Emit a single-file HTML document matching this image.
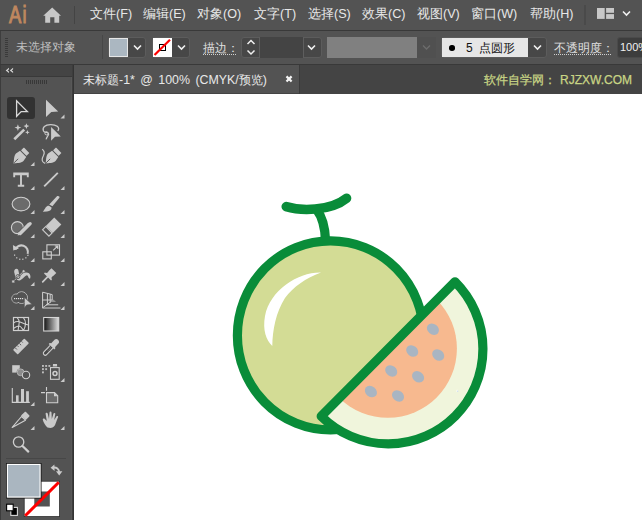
<!DOCTYPE html>
<html><head><meta charset="utf-8">
<style>
*{margin:0;padding:0;box-sizing:border-box}
html,body{width:642px;height:520px;overflow:hidden;background:#535353;font-family:"Liberation Sans",sans-serif;position:relative}
.abs{position:absolute}
.menu{position:absolute;top:0;left:0;width:642px;height:30px;background:#535353}
.mi{position:absolute;top:5.5px;font-size:12.6px;color:#e8e8e8;white-space:nowrap;line-height:16px}
.ctrl{position:absolute;top:31px;left:0;width:642px;height:33px;background:#535353;border-left:1px solid #3e3e3e}
.line{position:absolute;background:#393939}
.txt{position:absolute;white-space:nowrap}
.box{background:#474747;border:1px solid #5c5c5c;border-radius:3px}
</style></head><body>
<!-- menu bar -->
<div class="menu">
  <div class="txt" style="left:8.5px;top:3px;font-size:23px;color:#bf875f;line-height:24px;-webkit-text-stroke:1px #bf875f;transform:scaleX(0.8);transform-origin:0 0;letter-spacing:1.5px">Ai</div>
  <svg class="abs" style="left:43px;top:7px" width="19" height="16" viewBox="0 0 19 16"><path d="M9.2 0.5 L18 8.8 L16.2 8.8 L16.2 15.7 L11.4 15.7 L11.4 10.2 L7.2 10.2 L7.2 15.7 L2.2 15.7 L2.2 8.8 L0.2 8.8 Z" fill="#c8c8c8"/></svg>
  <div class="abs" style="left:74px;top:6px;width:1px;height:18px;background:#444"></div>
  <div class="mi" style="left:90px">文件(F)</div>
  <div class="mi" style="left:143px">编辑(E)</div>
  <div class="mi" style="left:197px">对象(O)</div>
  <div class="mi" style="left:254px">文字(T)</div>
  <div class="mi" style="left:308px">选择(S)</div>
  <div class="mi" style="left:362px">效果(C)</div>
  <div class="mi" style="left:417px">视图(V)</div>
  <div class="mi" style="left:471px">窗口(W)</div>
  <div class="mi" style="left:530px">帮助(H)</div>
  <div class="abs" style="left:584px;top:5px;width:2px;height:20px;background:#4a4a4a"></div>
  <svg class="abs" style="left:596px;top:7px" width="36" height="13" viewBox="0 0 36 13"><g fill="#c8c8c8"><rect x="1" y="1" width="7.7" height="10.9"/><rect x="10.1" y="1" width="7.9" height="4.8"/><rect x="10.1" y="7.1" width="7.9" height="4.8"/></g><path d="M27,4.5 L30.5,8 L34,4.5" stroke="#f0f0f0" stroke-width="1.6" fill="none"/></svg>
</div>
<div class="line" style="left:0;top:30px;width:642px;height:1px"></div>
<!-- control bar -->
<div class="ctrl"></div>
<div class="line" style="left:0;top:64px;width:642px;height:1px"></div>
<!-- control bar content -->
<div class="abs" style="left:5px;top:38px;width:3px;height:1px;background:#3a3a3a"></div><div class="abs" style="left:5px;top:40px;width:3px;height:1px;background:#3a3a3a"></div><div class="abs" style="left:5px;top:42px;width:3px;height:1px;background:#3a3a3a"></div><div class="abs" style="left:5px;top:44px;width:3px;height:1px;background:#3a3a3a"></div><div class="abs" style="left:5px;top:46px;width:3px;height:1px;background:#3a3a3a"></div><div class="abs" style="left:5px;top:48px;width:3px;height:1px;background:#3a3a3a"></div><div class="abs" style="left:5px;top:50px;width:3px;height:1px;background:#3a3a3a"></div><div class="abs" style="left:5px;top:52px;width:3px;height:1px;background:#3a3a3a"></div><div class="abs" style="left:5px;top:54px;width:3px;height:1px;background:#3a3a3a"></div><div class="abs" style="left:5px;top:56px;width:3px;height:1px;background:#3a3a3a"></div>
<div class="txt" style="left:15.5px;top:38.5px;font-size:12px;color:#bfbfbf;line-height:16px">未选择对象</div>
<div class="abs" style="left:102px;top:35px;width:1px;height:24px;background:#474747"></div>
<div class="abs box" style="left:108px;top:37px;width:38px;height:21px"></div>
<div class="abs" style="left:109px;top:38px;width:19px;height:19px;background:#abb7c1;border:1px solid #e6e6e6"></div>
<svg class="abs" style="left:133px;top:44px" width="9" height="7" viewBox="0 0 9 7"><path d="M1,1.5 L4.5,5 L8,1.5" stroke="#f0f0f0" stroke-width="1.6" fill="none"/></svg>
<div class="abs box" style="left:152px;top:37px;width:38px;height:21px"></div>
<svg class="abs" style="left:153px;top:38px" width="19" height="19" viewBox="0 0 19 19"><rect width="19" height="19" fill="#fff"/><rect x="6.5" y="6.5" width="6" height="6" fill="none" stroke="#000" stroke-width="1"/><path d="M1.5,17 L17,1.8" stroke="#f00" stroke-width="2.2"/></svg>
<svg class="abs" style="left:177px;top:44px" width="9" height="7" viewBox="0 0 9 7"><path d="M1,1.5 L4.5,5 L8,1.5" stroke="#f0f0f0" stroke-width="1.6" fill="none"/></svg>
<div class="txt" style="left:203px;top:40px;font-size:12px;color:#e0e0e0;line-height:16px">描边：</div>
<div class="abs" style="left:203px;top:54px;width:33px;height:1px;background:repeating-linear-gradient(90deg,#d0d0d0 0 1px,transparent 1px 2px)"></div>
<div class="abs box" style="left:241px;top:37px;width:81px;height:21px"></div>
<div class="abs" style="left:259px;top:37px;width:45px;height:21px;background:#444;border-left:1px solid #5e5e5e;border-right:1px solid #5e5e5e"></div>
<svg class="abs" style="left:246px;top:39px" width="10" height="17" viewBox="0 0 10 17"><path d="M1.5,5 L5,1.5 L8.5,5 M1.5,11.5 L5,15 L8.5,11.5" stroke="#f0f0f0" stroke-width="1.5" fill="none"/></svg>
<svg class="abs" style="left:307px;top:44px" width="9" height="7" viewBox="0 0 9 7"><path d="M1,1.5 L4.5,5 L8,1.5" stroke="#f0f0f0" stroke-width="1.6" fill="none"/></svg>
<div class="abs" style="left:327px;top:37px;width:90px;height:21px;background:#808080"></div>
<div class="abs" style="left:417px;top:37px;width:19px;height:21px;background:#505050"></div>
<svg class="abs" style="left:422px;top:44px" width="9" height="7" viewBox="0 0 9 7"><path d="M1,1.5 L4.5,5 L8,1.5" stroke="#6c6c6c" stroke-width="1.4" fill="none"/></svg>
<div class="abs box" style="left:441px;top:37px;width:106px;height:21px"></div>
<div class="abs" style="left:442px;top:38px;width:86px;height:19px;background:#e6e6e6"></div>
<div class="abs" style="left:449px;top:45px;width:5.5px;height:5.5px;border-radius:50%;background:#000"></div>
<div class="txt" style="left:466px;top:40px;font-size:12px;color:#111;line-height:16px">5&nbsp;&nbsp;点圆形</div>
<svg class="abs" style="left:533px;top:44px" width="9" height="7" viewBox="0 0 9 7"><path d="M1,1.5 L4.5,5 L8,1.5" stroke="#f0f0f0" stroke-width="1.6" fill="none"/></svg>
<div class="txt" style="left:554px;top:40px;font-size:12px;color:#e0e0e0;line-height:16px">不透明度：</div>
<div class="abs" style="left:554px;top:54px;width:57px;height:1px;background:repeating-linear-gradient(90deg,#d0d0d0 0 1px,transparent 1px 2px)"></div>
<div class="abs" style="left:617px;top:37px;width:40px;height:21px;background:#3d3d3d;border-radius:3px;border:1px solid #4a4a4a"></div>
<div class="txt" style="left:620px;top:39px;font-size:11px;color:#f0f0f0;line-height:16px;letter-spacing:0px">100%</div>
<!-- left panel -->
<div class="abs" style="left:0;top:65px;width:72px;height:11px;background:#444"></div>
<div class="line" style="left:0;top:76px;width:72px;height:1px"></div>
<div class="abs" style="left:0;top:65px;width:1px;height:455px;background:#3c3c3c"></div>
<svg class="abs" style="left:0;top:65px" width="20" height="11" viewBox="0 65 20 11"><path d="M9,67.8 L5.7,70.4 L9,73 L9,71.5 L7.6,70.4 L9,69.3 Z M13.1,67.8 L9.8,70.4 L13.1,73 L13.1,71.5 L11.7,70.4 L13.1,69.3 Z" fill="#d6d6d6"/></svg>
<div class="abs" style="left:26px;top:80px;width:1px;height:4px;background:#383838"></div><div class="abs" style="left:28px;top:80px;width:1px;height:4px;background:#383838"></div><div class="abs" style="left:30px;top:80px;width:1px;height:4px;background:#383838"></div><div class="abs" style="left:32px;top:80px;width:1px;height:4px;background:#383838"></div><div class="abs" style="left:34px;top:80px;width:1px;height:4px;background:#383838"></div><div class="abs" style="left:36px;top:80px;width:1px;height:4px;background:#383838"></div><div class="abs" style="left:38px;top:80px;width:1px;height:4px;background:#383838"></div><div class="abs" style="left:40px;top:80px;width:1px;height:4px;background:#383838"></div><div class="abs" style="left:42px;top:80px;width:1px;height:4px;background:#383838"></div><div class="abs" style="left:44px;top:80px;width:1px;height:4px;background:#383838"></div><div class="abs" style="left:46px;top:80px;width:1px;height:4px;background:#383838"></div>

<div class="abs" style="left:71px;top:77px;width:1px;height:443px;background:#585858"></div><div class="abs" style="left:72px;top:65px;width:1px;height:455px;background:#3d3d3d"></div><div class="abs" style="left:73px;top:65px;width:1px;height:455px;background:#343434"></div>
<!-- tools -->
<svg class="abs" style="left:0;top:0" width="72" height="520" viewBox="0 0 72 520">
<defs><linearGradient id="gr" x1="0" x2="1" y1="0" y2="0"><stop offset="0" stop-color="#111"/><stop offset="1" stop-color="#e0e0e0"/></linearGradient></defs>
<rect x="7" y="97" width="28" height="22" rx="3" fill="#323232"/>
<g fill="#cacaca">
 <!-- triangles -->
 <path d="M60.5,118.5 L64.5,118.5 L64.5,114.5 Z"/>
 <path d="M30.5,166 L34.5,166 L34.5,162 Z"/>
 <path d="M30.5,190 L34.5,190 L34.5,186 Z"/><path d="M60.5,190 L64.5,190 L64.5,186 Z"/>
 <path d="M30.5,214 L34.5,214 L34.5,210 Z"/><path d="M60.5,214 L64.5,214 L64.5,210 Z"/>
 <path d="M30.5,238 L34.5,238 L34.5,234 Z"/><path d="M60.5,238 L64.5,238 L64.5,234 Z"/>
 <path d="M30.5,262 L34.5,262 L34.5,258 Z"/><path d="M60.5,262 L64.5,262 L64.5,258 Z"/>
 <path d="M30.5,286 L34.5,286 L34.5,282 Z"/><path d="M60.5,286 L64.5,286 L64.5,282 Z"/>
 <path d="M30.5,310 L34.5,310 L34.5,306 Z"/><path d="M60.5,310 L64.5,310 L64.5,306 Z"/>
 <path d="M60.5,382 L64.5,382 L64.5,378 Z"/>
 <path d="M30.5,406 L34.5,406 L34.5,402 Z"/>
 <path d="M30.5,430 L34.5,430 L34.5,426 Z"/><path d="M60.5,430 L64.5,430 L64.5,426 Z"/>
</g>
<!-- selection -->
<path d="M16.6,100.8 L16.6,116.3 L21.2,111.6 L27.4,111.6 Z" fill="none" stroke="#d8d8d8" stroke-width="1.3" stroke-linejoin="miter"/>
<path d="M46,99.8 L46,117 L51.3,112 L58.2,111.6 Z" fill="#cacaca"/>
<!-- magic wand -->
<path d="M14.3,139.3 L24.2,129.6" stroke="#cacaca" stroke-width="2.6"/>
<path d="M17.90,124.20 L18.82,126.68 L21.30,127.60 L18.82,128.52 L17.90,131.00 L16.98,128.52 L14.50,127.60 L16.98,126.68 Z" fill="#cacaca"/><path d="M26.40,123.20 L27.21,125.29 L29.30,126.10 L27.21,126.91 L26.40,129.00 L25.59,126.91 L23.50,126.10 L25.59,125.29 Z" fill="#cacaca"/><path d="M27.40,130.00 L28.07,131.63 L29.70,132.30 L28.07,132.97 L27.40,134.60 L26.73,132.97 L25.10,132.30 L26.73,131.63 Z" fill="#cacaca"/>
<!-- lasso -->
<path d="M57.8,131 C60.5,127 56,124.5 50.5,124.6 C45,124.7 42,127.5 43.5,131 C44.5,133 47.5,132 48.5,133.5 C49.5,135 46,137 46.3,139.4" fill="none" stroke="#cacaca" stroke-width="1.3"/>
<circle cx="46.5" cy="133.3" r="1.6" fill="none" stroke="#cacaca" stroke-width="1"/>
<path d="M51.1,127.1 L51.1,140.7 L55,136.8 L60.8,136.4 Z" fill="#cacaca"/>
<!-- pen -->
<g transform="translate(13.5,163.4) rotate(45)">
 <path d="M0,0 C-1.6,-2.5 -5.3,-5.5 -5.3,-8.8 L-4.4,-13.6 L4.4,-13.6 L5.3,-8.8 C5.3,-5.5 1.6,-2.5 0,0 Z" fill="#cacaca"/>
 <rect x="-3.9" y="-18.6" width="7.8" height="4.1" rx="0.5" fill="#cacaca"/>
 <path d="M0,-0.8 L0,-6.5" stroke="#535353" stroke-width="0.9"/>
</g>
<g transform="translate(45.6,163.4) rotate(45)">
 <path d="M0,0 C-1.6,-2.5 -5.3,-5.5 -5.3,-8.8 L-4.4,-13.6 L4.4,-13.6 L5.3,-8.8 C5.3,-5.5 1.6,-2.5 0,0 Z" fill="#cacaca"/>
 <rect x="-3.9" y="-18.6" width="7.8" height="4.1" rx="0.5" fill="#cacaca"/>
 <path d="M0,-0.8 L0,-6.5" stroke="#535353" stroke-width="0.9"/>
</g>
<path d="M42.2,149.3 C44.5,151 45,152.5 43.5,155.5 C41.5,159 41.5,162 44.9,163.4" fill="none" stroke="#cacaca" stroke-width="1.2"/>
<!-- type -->
<path d="M14.2,177.2 L14.2,173.4 L27.8,173.4 L27.8,177.2 M14.2,174.4 L27.8,174.4 M21,174 L21,185.8 M17.8,185.8 L24.2,185.8" fill="none" stroke="#cacaca" stroke-width="1.9"/>
<!-- line -->
<path d="M44.2,186.4 L57.8,172.8" stroke="#cacaca" stroke-width="1.9"/>
<!-- ellipse -->
<ellipse cx="21" cy="204.1" rx="8.9" ry="6.8" fill="#6b6b6b" stroke="#cfcfcf" stroke-width="1.1"/>
<!-- brush -->
<path d="M57.2,196.1 C58.5,195.6 60,196.5 59.4,197.8 L52.4,206.3 L49.2,204.4 Z" fill="#cacaca"/>
<path d="M49,205.8 L51.6,207.6 C51.8,209.8 50,211.4 47,211.6 L42.8,211.7 C44,210.6 44.8,208.8 45.8,207.3 C46.6,206.2 47.8,205.6 49,205.8 Z" fill="#cacaca"/>
<!-- shaper -->
<circle cx="17.4" cy="227.6" r="6" fill="#6b6b6b" stroke="#cfcfcf" stroke-width="1.1"/>
<path d="M30,224 L20,234" stroke="#535353" stroke-width="5.5"/>
<path d="M29.8,223.8 L20.5,233.1 L18,235.6 L18.6,232.4 L27.9,223.1 C28.8,222.3 30.6,222.9 29.8,223.8 Z" fill="#cacaca"/>
<path d="M30.2,223.6 L20.2,233.6" stroke="#cacaca" stroke-width="3.2" stroke-linecap="round"/>
<path d="M20.6,233.2 L17.7,235.7 L18.5,232" fill="#cacaca"/>
<!-- eraser -->
<g transform="translate(51.4,227.3) rotate(45)">
 <rect x="-5" y="-9" width="10" height="12" fill="#cacaca"/>
 <rect x="-4.5" y="3.5" width="9" height="4.5" fill="none" stroke="#cacaca" stroke-width="1.1"/>
</g>
<!-- rotate -->
<path d="M15.29,249.68 A6.5,6.5 0 0 1 27.58,253.91" fill="none" stroke="#cacaca" stroke-width="2.1"/>
<path d="M12.9,244.9 L13.3,250.6 L18.9,248.6 Z" fill="#cacaca"/>
<rect x="13.99" y="254.53" width="1.2" height="1.2" fill="#d0d0d0"/><rect x="16.14" y="257.23" width="1.2" height="1.2" fill="#d0d0d0"/><rect x="19.16" y="258.64" width="1.2" height="1.2" fill="#d0d0d0"/><rect x="22.24" y="258.64" width="1.2" height="1.2" fill="#d0d0d0"/><rect x="25.26" y="257.23" width="1.2" height="1.2" fill="#d0d0d0"/><rect x="27.29" y="254.76" width="1.2" height="1.2" fill="#d0d0d0"/>
<!-- scale -->
<rect x="46.9" y="244.8" width="12.6" height="10.3" fill="none" stroke="#cfcfcf" stroke-width="1.1"/>
<rect x="42.8" y="251.8" width="8.5" height="7.1" fill="none" stroke="#cfcfcf" stroke-width="1.1"/>
<path d="M53.2,250.4 L57.5,246.2 M54.8,246 L57.8,246 L57.8,249" fill="none" stroke="#cfcfcf" stroke-width="1.1"/>
<!-- puppet warp -->
<path d="M14.2,272.3 C14,270 15,268.8 16.5,268.8 C17.8,268.9 18.6,270 18.6,271.5 L19.2,274.2 C21,273.8 23.5,272.8 25.7,272.6 C28,272.4 30.2,273.6 30.4,276 C30.5,277.2 30.2,278.5 29.9,278.8 C29.3,278.8 28.8,278.2 28.5,277.6 C28.2,276.5 27.6,275.2 27,275.2 C26,275.3 25,276.2 23.5,277.8 C22,279.3 20.6,280.4 19.2,280.4 C17.5,280.4 16.2,279.6 15.6,278.2 C15,276.8 15,274.5 14.2,272.3 Z" fill="#cacaca"/>
<path d="M13.4,281.4 L23.4,271.4" stroke="#535353" stroke-width="2"/>
<path d="M13.4,281.4 L23.4,271.4" stroke="#cacaca" stroke-width="0.8"/>
<circle cx="17.9" cy="276.6" r="2" fill="#cacaca" stroke="#535353" stroke-width="0.9"/>
<path d="M16.8,277.7 L19,275.5" stroke="#535353" stroke-width="0.9"/>
<rect x="11.9" y="280.1" width="2.8" height="2.8" fill="#cacaca" stroke="#535353" stroke-width="0.5"/>
<circle cx="23.6" cy="271.2" r="1.5" fill="#cacaca" stroke="#535353" stroke-width="0.6"/>
<!-- pin -->
<g transform="translate(42.3,282.2) rotate(45)">
 <path d="M-5,-7.4 L5,-7.4 L5,-8.6 C3.2,-9.2 2.6,-10.6 3.4,-12.4 L3.4,-16.4 L-3.4,-16.4 L-3.4,-12.4 C-2.6,-10.6 -3.2,-9.2 -5,-8.6 Z" fill="#cacaca"/>
 <path d="M0,-0.6 L0,-7.5" stroke="#cacaca" stroke-width="1.7" stroke-linecap="round"/>
</g>
<!-- shape builder -->
<circle cx="16.3" cy="298.5" r="4.5" fill="none" stroke="#c4c4c4" stroke-width="1"/>
<circle cx="21.6" cy="297.6" r="5.8" fill="none" stroke="#c4c4c4" stroke-width="1"/>
<circle cx="16.3" cy="298.5" r="4" fill="#535353"/>
<circle cx="21.6" cy="297.6" r="5.3" fill="#535353"/>
<rect x="14" y="298" width="1.2" height="1.2" fill="#e0e0e0"/><rect x="16" y="298" width="1.2" height="1.2" fill="#e0e0e0"/><rect x="18" y="298" width="1.2" height="1.2" fill="#e0e0e0"/><rect x="20" y="298" width="1.2" height="1.2" fill="#e0e0e0"/><rect x="22" y="298" width="1.2" height="1.2" fill="#e0e0e0"/>
<path d="M24.3,297.2 L24.3,308.3 L26.6,305 L32.2,304.5 Z" fill="#cacaca" stroke="#535353" stroke-width="0.7"/>
<!-- perspective grid -->
<path d="M42.6,292.2 L42.6,308 M42.6,292.2 L52.2,294.6 L52.2,300.8 M42.6,300 L52.2,300 M47.4,293.4 L47.4,304.5 M50.2,294 L50.2,302.5 M42.6,308 L60.5,308 M46,304.8 L58.2,304.8 M42.6,307.8 L52.2,300.8" fill="none" stroke="#cfcfcf" stroke-width="1"/>
<path d="M51,301.5 L53.5,299.5 L56,302 L51,302 Z" fill="#8e8e8e"/>
<!-- mesh -->
<rect x="13.5" y="317.5" width="15" height="13" fill="#464646" stroke="#cfcfcf" stroke-width="1.2"/>
<path d="M17.3,317.8 C19,319.5 19.5,321 19.2,322.5 C19,324.5 18.5,327 18.1,330.5 M13.8,322.8 C15,321.8 16.5,321 19.2,321.7 C21,322.2 23.5,324 28.5,325 M23.5,317.8 C25,319.5 25.6,321.5 25.5,323.5 C25.4,326 24.8,328.5 23.5,330.5 M13.8,328.2 C15.5,327 17,326.3 18.7,326 C20.2,325.8 22,328 23.5,330.5" fill="none" stroke="#cfcfcf" stroke-width="1.1"/>
<!-- gradient -->
<rect x="43.7" y="317.5" width="15" height="13.5" fill="url(#gr)" stroke="#d6d6d6" stroke-width="1.1"/>
<!-- measure -->
<g transform="translate(21,346.5) rotate(-45)">
 <rect x="-8" y="-3.3" width="16" height="6.6" rx="0.8" fill="#cacaca"/>
 <path d="M-5,-3.3 L-5,-0.8 M-2,-3.3 L-2,-1.6 M1,-3.3 L1,-0.8 M4,-3.3 L4,-1.6" stroke="#535353" stroke-width="0.9"/>
</g>
<!-- eyedropper -->
<g transform="translate(44.3,354.3) rotate(44)">
 <path d="M-1.9,-10.5 L-1.9,-1.4 A1.9,1.9 0 0 0 1.9,-1.4 L1.9,-10.5" fill="#464646" stroke="#cfcfcf" stroke-width="1.1"/>
 <path d="M-1.4,-9 L1.4,-9 M-1.4,-7.2 L1.4,-7.2 M-1.4,-5.4 L1.4,-5.4" stroke="#8a8a8a" stroke-width="0.6"/>
 <path d="M-3.9,-10.4 L3.9,-10.4 L3.9,-11.8 L2.7,-12.8 L2.7,-17.5 C2.7,-19.2 1.2,-20 0,-20 C-1.2,-20 -2.7,-19.2 -2.7,-17.5 L-2.7,-12.8 L-3.9,-11.8 Z" fill="#cacaca"/>
</g>
<!-- blend -->
<rect x="12.2" y="365.2" width="7.6" height="7.4" fill="#cacaca"/>
<circle cx="20.6" cy="372.3" r="3.9" fill="#535353"/>
<circle cx="20.6" cy="372.3" r="3.4" fill="#8c8c8c" stroke="#c0c0c0" stroke-width="0.8"/>
<circle cx="26" cy="375" r="4.3" fill="#535353"/>
<circle cx="26" cy="375" r="3.7" fill="#535353" stroke="#cfcfcf" stroke-width="1.1"/>
<!-- symbol sprayer -->
<g fill="#bdbdbd"><rect x="42" y="365" width="1.9" height="1.9"/><rect x="45.2" y="365" width="1.9" height="1.9"/><rect x="48.4" y="365" width="1.9" height="1.9"/><rect x="42" y="368.2" width="1.9" height="1.9"/><rect x="45.2" y="368.2" width="1.9" height="1.9"/><rect x="42" y="371.4" width="1.9" height="1.9"/></g>
<path d="M53,364 L57,364 L57.2,366.4 L52.8,366.4 Z" fill="#cacaca"/>
<rect x="50.5" y="367.6" width="8.7" height="11.7" fill="none" stroke="#cfcfcf" stroke-width="1.1"/>
<circle cx="55" cy="373.5" r="2" fill="none" stroke="#cfcfcf" stroke-width="1.5"/>
<!-- graph -->
<path d="M12.3,388 L12.3,402.4 L29.8,402.4" fill="none" stroke="#cfcfcf" stroke-width="1.1"/>
<rect x="16" y="395.3" width="2.6" height="7" fill="#cacaca"/><rect x="21" y="389" width="3" height="13.3" fill="#cacaca"/><rect x="26.1" y="391.2" width="2.8" height="11.1" fill="#cacaca"/>
<!-- artboard -->
<path d="M46.5,387 L46.5,390.8 M41,392.6 L45,392.6" stroke="#cfcfcf" stroke-width="1.1"/>
<path d="M46.5,392.6 L54.5,392.6 L57.7,395.8 L57.7,402.8 L46.5,402.8 Z" fill="#6b6b6b" stroke="#cfcfcf" stroke-width="1.1"/>
<path d="M54,392.6 L54,396.3 L57.7,396.3 Z" fill="#cfcfcf"/>
<!-- pencil/knife -->
<path d="M12.2,427.4 L21.5,416.5 L25.5,420.2 Z" fill="none" stroke="#cfcfcf" stroke-width="1.1" stroke-linejoin="round"/>
<path d="M21,415.5 L24.5,412.2 C25,411.7 25.6,411.7 26,412.1 L29.2,415.3 C29.6,415.7 29.6,416.3 29.1,416.8 L25.8,420 Z" fill="#cacaca"/>
<!-- hand -->
<path d="M47.5,427.6 C45.5,426 43.5,422.5 42.8,419.8 C42.5,418.8 43.6,418 44.6,418.8 L46.8,421 L45.6,413.8 C45.4,412.5 47.3,412.2 47.7,413.4 L49,419 L49.5,412.4 C49.6,411.2 51.4,411.2 51.5,412.4 L51.8,419 L53.5,413.6 C53.9,412.6 55.5,412.9 55.3,414 L54.2,420 L56.4,416.4 C57,415.5 58.5,416 58.1,417.1 L55.8,423 C55,426 53.5,427.8 50.5,428 Z" fill="#cacaca"/>
<!-- zoom -->
<circle cx="18.6" cy="442" r="5.2" fill="none" stroke="#cfcfcf" stroke-width="1.3"/>
<path d="M22.5,446 L28.3,451.6" stroke="#cfcfcf" stroke-width="2.2" stroke-linecap="round"/>
<!-- separator -->
<rect x="6" y="458" width="60" height="1" fill="#474747"/>
<!-- fill/stroke -->
<rect x="24.2" y="481.2" width="35.4" height="35.4" fill="#fff" stroke="#2e2e2e" stroke-width="0.8"/>
<rect x="34.3" y="491.5" width="15.5" height="15" fill="#535353"/>
<path d="M25.2,515.8 L58.8,482.2" stroke="#f00" stroke-width="3"/>
<rect x="6" y="463" width="35.5" height="35.5" fill="#111"/>
<rect x="6.8" y="463.8" width="33.9" height="33.9" fill="#fff"/>
<rect x="8" y="465" width="31.5" height="31.5" fill="#aab6c0"/>
<!-- swap -->
<path d="M53.2,467.6 C56.5,467 59,469 59.2,472.2" fill="none" stroke="#cacaca" stroke-width="1.9"/>
<path d="M50.6,467.8 L54.4,464.4 L54.6,471 Z M56,471.2 L62.4,471.2 L59.2,475.4 Z" fill="#cacaca"/>
<!-- default -->
<rect x="10.8" y="507.4" width="6.6" height="8" fill="#000" stroke="#d8d8d8" stroke-width="1.1"/>
<rect x="6.6" y="504.2" width="6.6" height="6.6" fill="#fff" stroke="#000" stroke-width="1.1"/>
</svg>
<!-- tab row -->
<div class="abs" style="left:74px;top:65px;width:568px;height:29px;background:#444"></div>
<div class="abs" style="left:74px;top:65px;width:225px;height:28px;background:#535353"></div><div class="abs" style="left:299px;top:65px;width:1px;height:29px;background:#3b3b3b"></div>
<div class="txt" style="left:83px;top:72px;font-size:12.4px;line-height:16px;color:#e8e8e8;word-spacing:2px">未标题-1* @ 100% (CMYK/预览)</div>
<svg class="abs" style="left:284px;top:74px" width="10" height="10" viewBox="0 0 10 10"><path d="M2.5,2.4 L7.6,7.5 M7.6,2.4 L2.5,7.5" stroke="#f4f4f4" stroke-width="2.2"/></svg>
<div class="txt" style="left:484px;top:72px;font-size:12px;color:#c8d585;-webkit-text-stroke:0.25px #c8d585;line-height:16px">软件自学网<span style="letter-spacing:4px">：</span>RJZXW.COM</div>
<!-- canvas -->
<div class="abs" style="left:74px;top:94px;width:568px;height:426px;background:#fff"></div>
<!-- artwork -->
<svg class="abs" style="left:0;top:0" width="642" height="520" viewBox="0 0 642 520">
  <g stroke="#098c39" stroke-linecap="round" stroke-linejoin="round" fill="none">
    <path d="M286.2,206.6 C300,210.8 330,211.6 346.6,198.2" stroke-width="9.5"/>
    <path d="M316.6,209.5 Q324.8,220 325.6,241" stroke-width="9.3"/>
    <ellipse cx="330.5" cy="335.4" rx="93.1" ry="94.55" fill="#d3dc95" stroke-width="9.2"/>
  </g>
  <path d="M321,272.5 C298,272 270,290 265,316 C262.5,330 266,340 272.3,346 C272.5,330 276,312 285,298 C293,287 306,278 321,272.5 Z" fill="#fff"/>
  <path d="M321.2,416.2 L455,281.8 A94.8,94.8 0 0 1 321.2,416.2 Z" fill="#f0f5dc"/>
  <path d="M339.2,398.1 L437,299.9 A69.3,69.3 0 0 1 339.2,398.1 Z" fill="#f7b98f"/>
  <g fill="#a9b5c2"><ellipse cx="432.9" cy="329.2" rx="6.5" ry="5.25" transform="rotate(38 432.9 329.2)"/><ellipse cx="412.2" cy="351.0" rx="6.5" ry="5.25" transform="rotate(38 412.2 351.0)"/><ellipse cx="438.2" cy="355.0" rx="6.5" ry="5.25" transform="rotate(38 438.2 355.0)"/><ellipse cx="391.2" cy="370.9" rx="6.5" ry="5.25" transform="rotate(38 391.2 370.9)"/><ellipse cx="418.1" cy="376.8" rx="6.5" ry="5.25" transform="rotate(38 418.1 376.8)"/><ellipse cx="370.9" cy="391.6" rx="6.5" ry="5.25" transform="rotate(38 370.9 391.6)"/><ellipse cx="398.0" cy="395.9" rx="6.5" ry="5.25" transform="rotate(38 398.0 395.9)"/></g>
  <rect x="456.6" y="389.8" width="1.2" height="2.2" fill="#fff"/><rect x="457.2" y="390.6" width="1" height="1.3" fill="#c5d8ea"/>
  <path d="M321.2,416.2 L455,281.8 A94.8,94.8 0 0 1 321.2,416.2 Z" fill="none" stroke="#098c39" stroke-width="9.2" stroke-linejoin="round"/>
</svg>
</body></html>
